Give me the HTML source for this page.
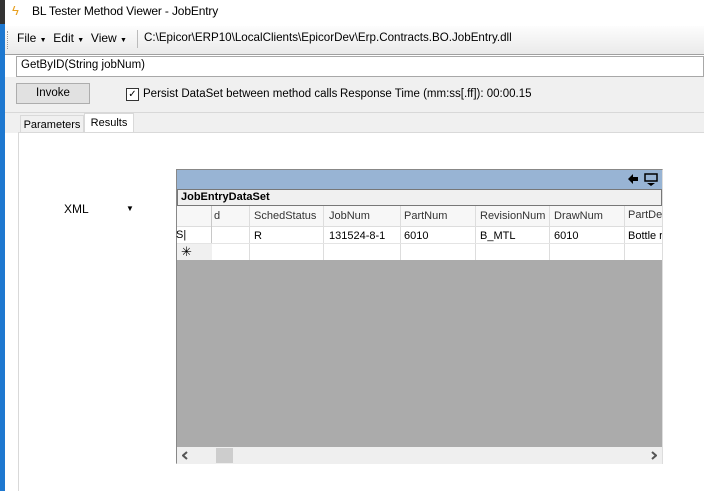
<!DOCTYPE html><html><head><style>
*{margin:0;padding:0;box-sizing:border-box}
body{width:704px;height:491px;overflow:hidden;background:#fff;font-family:"Liberation Sans",sans-serif;font-size:11px;color:#000;position:relative}
.a{position:absolute;white-space:nowrap}
</style></head><body>
<div class="a" style="left:0;top:0;width:5px;height:491px;background:#1e78d0"></div>
<div class="a" style="left:0;top:0;width:5px;height:24px;background:#333"></div>
<div class="a" style="left:5px;top:0;width:699px;height:24px;background:#fff"></div>
<div class="a" style="left:12px;top:3px;font-size:13px;color:#e8a020">ϟ</div>
<div class="a" style="left:32px;top:4px;font-size:12px;letter-spacing:-0.15px">BL Tester Method Viewer - JobEntry</div>
<div class="a" style="left:5px;top:26px;width:699px;height:29px;background:linear-gradient(#fdfdfd,#eaeaea);border-bottom:1px solid #a0a0a0"></div>
<div class="a" style="left:7px;top:31px;width:1px;height:18px;border-left:1px dotted #999"></div>
<div class="a" style="left:17px;top:31px;font-size:12px">File <span style="font-size:7px">▼</span>&nbsp; Edit <span style="font-size:7px">▼</span>&nbsp; View <span style="font-size:7px">▼</span></div>
<div class="a" style="left:137px;top:30px;width:1px;height:18px;background:#bbb"></div>
<div class="a" style="left:144px;top:31px;font-size:11.6px">C:\Epicor\ERP10\LocalClients\EpicorDev\Erp.Contracts.BO.JobEntry.dll</div>
<div class="a" style="left:16px;top:56px;width:688px;height:21px;border:1px solid #a8a8a8;background:#fff"></div>
<div class="a" style="left:21px;top:59px;font-size:11.5px">GetByID(String jobNum)</div>
<div class="a" style="left:5px;top:77px;width:699px;height:36px;background:#f0f0f0;border-bottom:1px solid #d8d8d8"></div>
<div class="a" style="left:16px;top:83px;width:74px;height:21px;background:#e1e1e1;border:1px solid #adadad;text-align:center;line-height:19px;font-size:11.5px">Invoke</div>
<div class="a" style="left:126px;top:88px;width:13px;height:13px;border:1px solid #333;background:#fff;font-size:10px;line-height:11px;text-align:center">✓</div>
<div class="a" style="left:143px;top:88px;font-size:11.5px">Persist DataSet between method calls</div>
<div class="a" style="left:340px;top:88px;font-size:11.5px">Response Time (mm:ss[.ff]): 00:00.15</div>
<div class="a" style="left:5px;top:113px;width:699px;height:20px;background:#f0f0f0"></div>
<div class="a" style="left:20px;top:115px;width:64px;height:18px;border:1px solid #d9d9d9;border-bottom:none;background:#f0f0f0;text-align:center;line-height:18px">Parameters</div>
<div class="a" style="left:84px;top:113px;width:50px;height:21px;border:1px solid #d9d9d9;border-bottom:none;background:#fff;text-align:center;line-height:18px">Results</div>
<div class="a" style="left:18px;top:132px;width:686px;height:359px;border-left:1px solid #d9d9d9;border-top:1px solid #d9d9d9;background:#fff"></div>
<div class="a" style="left:64px;top:202px;font-size:12px">XML</div>
<div class="a" style="left:126px;top:204px;font-size:8px">▼</div>
<div class="a" style="left:176px;top:169px;width:487px;height:295px;border:1px solid #888;border-right:1px solid #ddd;border-bottom:1px solid #ddd;background:#ababab"></div>
<div class="a" style="left:177px;top:170px;width:485px;height:19px;background:#98b4d4"></div>
<svg class="a" style="left:627px;top:173px" width="32" height="14"><path d="M1 6 L6 1 L6 4 L11 4 L11 8 L6 8 L6 11 Z" fill="#000"/><rect x="18" y="1" width="12" height="7" fill="none" stroke="#000" stroke-width="1.5"/><path d="M20 10 h8 l-4 3z M17 10 h3" fill="#000"/></svg>
<div class="a" style="left:177px;top:189px;width:485px;height:17px;background:#f0f0f0;border:1px solid #777;font-weight:bold;padding-left:3px;line-height:15px">JobEntryDataSet</div>
<div class="a" style="left:177px;top:206px;width:485px;height:54px;background:#fff"></div>
<div class="a" style="left:177px;top:206px;width:485px;height:21px;background:#f7f7f7;border-bottom:1px solid #ddd"></div>
<div class="a" style="left:211px;top:206px;width:1px;height:54px;background:#c8c8c8"></div>
<div class="a" style="left:249px;top:206px;width:1px;height:54px;background:#ddd"></div>
<div class="a" style="left:323px;top:206px;width:1px;height:54px;background:#ddd"></div>
<div class="a" style="left:400px;top:206px;width:1px;height:54px;background:#ddd"></div>
<div class="a" style="left:475px;top:206px;width:1px;height:54px;background:#ddd"></div>
<div class="a" style="left:549px;top:206px;width:1px;height:54px;background:#ddd"></div>
<div class="a" style="left:624px;top:206px;width:1px;height:54px;background:#ddd"></div>
<div class="a" style="left:177px;top:243px;width:485px;height:1px;background:#e4e4e4"></div>
<div class="a" style="left:177px;top:244px;width:35px;height:16px;background:#f0f0f0"></div>
<div class="a" style="left:214px;top:210px;color:#333">d</div>
<div class="a" style="left:254px;top:210px;color:#333">SchedStatus</div>
<div class="a" style="left:329px;top:210px;color:#333">JobNum</div>
<div class="a" style="left:404px;top:210px;color:#333">PartNum</div>
<div class="a" style="left:480px;top:210px;color:#333">RevisionNum</div>
<div class="a" style="left:554px;top:210px;color:#333">DrawNum</div>
<div class="a" style="left:628px;top:209px;color:#333;width:34px;overflow:hidden">PartDesc</div>
<div class="a" style="left:176px;top:229px">S|</div>
<div class="a" style="left:254px;top:230px">R</div>
<div class="a" style="left:329px;top:230px">131524-8-1</div>
<div class="a" style="left:404px;top:230px">6010</div>
<div class="a" style="left:480px;top:230px">B_MTL</div>
<div class="a" style="left:554px;top:230px">6010</div>
<div class="a" style="left:628px;top:230px;width:34px;overflow:hidden">Bottle rack</div>
<div class="a" style="left:181px;top:244px;font-size:13px">✳</div>
<div class="a" style="left:177px;top:447px;width:485px;height:17px;background:#efefef"></div>
<svg class="a" style="left:182px;top:451px" width="6" height="9"><path d="M5 1 L1 4.5 L5 8" stroke="#555" stroke-width="2" fill="none"/></svg>
<div class="a" style="left:216px;top:448px;width:17px;height:15px;background:#cdcdcd"></div>
<svg class="a" style="left:651px;top:451px" width="6" height="9"><path d="M1 1 L5 4.5 L1 8" stroke="#555" stroke-width="2" fill="none"/></svg>
</body></html>
